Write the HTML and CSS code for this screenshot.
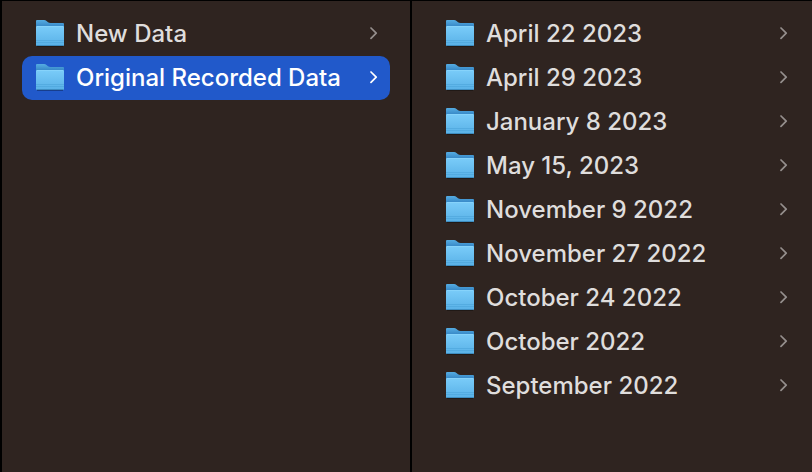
FILE: index.html
```html
<!DOCTYPE html>
<html lang="en">

<head>
    <meta charset="UTF-8">
    <meta name="viewport" content="width=device-width, initial-scale=1.0">
    <title>Original Recorded Data</title>
    <link rel="stylesheet" href="styles.css">
</head>

<body>
    <!-- Shared icons -->
    <svg class="icon-defs" aria-hidden="true">
        <defs>
            <linearGradient id="folderFront" x1="0" y1="0" x2="0" y2="1">
                <stop offset="0" stop-color="#7accf9" />
                <stop offset="1" stop-color="#59b1e7" />
            </linearGradient>
            <linearGradient id="folderBack" x1="0" y1="0" x2="0" y2="1">
                <stop offset="0" stop-color="#55ace2" />
                <stop offset="1" stop-color="#2f7fc0" />
            </linearGradient>
        </defs>
        <symbol id="folder" viewBox="0 0 28 28">
            <path d="M1 25h26v2H1z" fill="#000" opacity=".3" />
            <path d="M0 1Q0 0 1 0H8Q9.500 0 10.500 1L12 2.200Q13 3 14.500 3H27Q28 3 28 4V8H0z" fill="url(#folderBack)" />
            <path d="M0 7Q0 6 1 6H27Q28 6 28 7V25Q28 26 27 26H1Q0 26 0 25z" fill="url(#folderFront)" />
            <path d="M1 6.500H27" stroke="#86d3fb" stroke-width="1" />
            <path d="M0 20.500H28M0 22.500H28" stroke="#419bd3" stroke-width="1" opacity=".4" />
            <path d="M.5 25.500H27.500" stroke="#3e8dc0" stroke-width="1" />
        </symbol>
        <symbol id="chevron" viewBox="0 0 8 14">
            <path d="M1 1L6.200 6.200L1 11.400" fill="none" stroke="currentColor" stroke-width="1.700" stroke-linecap="round" stroke-linejoin="round" />
        </symbol>
    </svg>

    <main class="browser">
        <ul class="column">
            <li><a class="row" href="#"><svg class="folder"><use href="#folder" /></svg><span class="name">New Data</span><svg class="chevron"><use href="#chevron" /></svg></a></li>
            <li><a class="row selected" href="#" aria-current="true"><svg class="folder"><use href="#folder" /></svg><span class="name">Original Recorded Data</span><svg class="chevron"><use href="#chevron" /></svg></a></li>
        </ul>

        <ul class="column">
            <li><a class="row" href="#"><svg class="folder"><use href="#folder" /></svg><span class="name">April 22 2023</span><svg class="chevron"><use href="#chevron" /></svg></a></li>
            <li><a class="row" href="#"><svg class="folder"><use href="#folder" /></svg><span class="name">April 29 2023</span><svg class="chevron"><use href="#chevron" /></svg></a></li>
            <li><a class="row" href="#"><svg class="folder"><use href="#folder" /></svg><span class="name">January 8 2023</span><svg class="chevron"><use href="#chevron" /></svg></a></li>
            <li><a class="row" href="#"><svg class="folder"><use href="#folder" /></svg><span class="name">May 15, 2023</span><svg class="chevron"><use href="#chevron" /></svg></a></li>
            <li><a class="row" href="#"><svg class="folder"><use href="#folder" /></svg><span class="name">November 9 2022</span><svg class="chevron"><use href="#chevron" /></svg></a></li>
            <li><a class="row" href="#"><svg class="folder"><use href="#folder" /></svg><span class="name">November 27 2022</span><svg class="chevron"><use href="#chevron" /></svg></a></li>
            <li><a class="row" href="#"><svg class="folder"><use href="#folder" /></svg><span class="name">October 24 2022</span><svg class="chevron"><use href="#chevron" /></svg></a></li>
            <li><a class="row" href="#"><svg class="folder"><use href="#folder" /></svg><span class="name">October 2022</span><svg class="chevron"><use href="#chevron" /></svg></a></li>
            <li><a class="row" href="#"><svg class="folder"><use href="#folder" /></svg><span class="name">September 2022</span><svg class="chevron"><use href="#chevron" /></svg></a></li>
        </ul>
    </main>
</body>

</html>
```

FILE: styles.css
```css
* {
    margin: 0;
    padding: 0;
    box-sizing: border-box;
}

body {
    font-family: Inter, "Liberation Sans", sans-serif;
    background-color: #2f2420;
    color: #dfdddc;
}

/* not display: none, the gradients have to stay usable */
.icon-defs {
    display: block;
    width: 0;
    height: 0;
}

.browser {
    display: flex;
    min-height: 100vh;
    border-top: 1px solid #000;
    border-left: 2px solid #000;
}

/* content-box keeps the rows equally wide in every column */
.column {
    flex: 1;
    box-sizing: content-box;
    min-width: 0;
    padding: 11px 12px 12px 20px;
    list-style: none;
}

.column:first-child {
    padding-right: 20px;
    border-right: 2px solid #000;
}

.row {
    display: flex;
    align-items: center;
    height: 44px;
    padding: 0 12px 0 14px;
    border-radius: 10px;
    color: inherit;
    font-size: 24px;
    font-weight: 500;
    line-height: 32px;
    text-decoration: none;
}

.folder {
    flex: none;
    width: 28px;
    height: 28px;
    margin-right: 12px;
}

.name {
    flex: 1;
    min-width: 0;
    overflow: hidden;
    text-overflow: ellipsis;
    white-space: nowrap;
}

.chevron {
    flex: none;
    width: 8px;
    height: 14px;
    color: #958f8d;
}

.selected {
    background-color: #2159ca;
    color: #fff;
}

.selected .chevron {
    color: #fff;
}
```
